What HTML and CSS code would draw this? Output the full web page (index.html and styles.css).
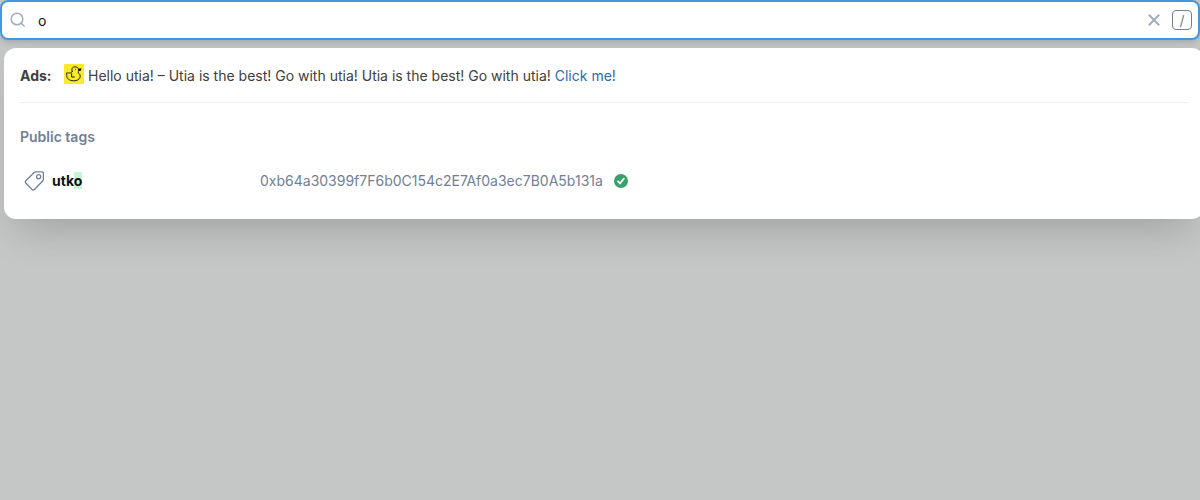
FILE: index.html
```html
<!DOCTYPE html>
<html lang="en">
<head>
<meta charset="utf-8">
<title>Search</title>
<link rel="stylesheet" href="styles.css">
</head>
<body>
<form class="search" role="search">
  <svg class="search-icon" viewBox="0 0 16 16" aria-hidden="true"><circle cx="7" cy="7" r="5.8"/><path d="M11.3 11.3l2.900 2.900"/></svg>
  <input class="search-input" type="text" value="o" aria-label="Search">
  <button class="clear" type="button" aria-label="Clear search"><svg viewBox="0 0 12 12" aria-hidden="true"><path d="M.8.8l10.4 10.4M11.2.8L.8 11.2"/></svg></button>
  <kbd class="key">/</kbd>
</form>
<main class="results">
  <section class="ad">
    <strong class="ad-label">Ads:</strong>
    <svg class="duck" viewBox="0 0 20 20" aria-hidden="true"><rect width="20" height="20" fill="#f9ea2e"/><path class="duck-line" d="M8.300 7.500C7 5 8.500 2.800 11 2.800c2.300 0 3.700 1.500 3.700 3.200 0 1.200-.7 2-.5 2.900 1.600 1 2.300 2.500 1.900 4.200-.7 2.500-3.100 3.700-6.600 3.700-4.200 0-6.700-2.300-6.700-5.200 0-1-.6-1.900-.3-2.500.4-.7 1.500-.1 2.700 0 1.300 0 2.400-.5 3.100-1.600M7.600 9.800v3.200h2.700"/><path d="M14.800 4.700l2.700-.5-.7 2.600-1.800.1z"/><circle cx="11.600" cy="5.200" r=".5"/></svg>
    <p class="ad-text">Hello utia! – Utia is the best! Go with utia! Utia is the best! Go with utia! <a href="#">Click me!</a></p>
  </section>
  <section>
    <h2 class="heading">Public tags</h2>
    <a class="result" href="#">
      <span class="tag">
        <svg class="tag-icon" viewBox="0 0 20 20" aria-hidden="true"><path d="M11.7.8h6.100a1.600 1.600 0 0 1 1.600 1.600v6.100a1.600 1.600 0 0 1-.5 1.200l-8.500 8.800a1.600 1.600 0 0 1-2.300 0L1.800 12a1.600 1.600 0 0 1 0-2.300l8.700-8.400a1.600 1.600 0 0 1 1.200-.5z"/><circle cx="14.600" cy="5.700" r="2.100"/></svg>
        <span class="tag-name">utk<mark>o</mark></span>
      </span>
      <span class="address">0xb64a30399f7F6b0C154c2E7Af0a3ec7B0A5b131a</span>
      <svg class="verified" viewBox="0 0 14 14" role="img" aria-label="Verified"><circle cx="7" cy="7" r="7"/><path d="M4 7.400l2 2 3.800-4.800"/></svg>
    </a>
  </section>
</main>
</body>
</html>
```
FILE: styles.css
```css
* { box-sizing: border-box; }
body {
  margin: 0;
  min-height: 100vh;
  overflow: hidden;
  background: #c5c7c6;
  font: 14px/20px Inter, sans-serif;
  color: #404040;
}
a { color: #2b6cb0; text-decoration: none; }
.search {
  display: flex;
  align-items: center;
  height: 40px;
  padding: 0 6px 0 8px;
  border: 2px solid #4299e1;
  border-radius: 8px;
  background: #fff;
  box-shadow: 0 4px 6px -1px rgba(0, 0, 0, .1), 0 2px 4px -1px rgba(0, 0, 0, .06);
}
.search-icon {
  width: 16px;
  height: 16px;
  fill: none;
  stroke: #a0aec0;
  stroke-width: 1.5;
  stroke-linecap: round;
}
.search-input {
  flex: 1;
  min-width: 0;
  padding: 1px 12px 0;
  border: 0;
  outline: 0;
  background: transparent;
  font: inherit;
  color: #101112;
}
.clear {
  display: flex;
  align-items: center;
  justify-content: center;
  width: 20px;
  height: 20px;
  margin-right: 8px;
  padding: 0;
  border: 0;
  background: none;
}
.clear svg {
  width: 12px;
  height: 12px;
  stroke: #a0aec0;
  stroke-width: 2;
}
.key {
  width: 20px;
  height: 20px;
  border: 1px solid #718096;
  border-radius: 4px;
  font: 14px/20px Inter, sans-serif;
  text-align: center;
  color: #718096;
}
.results {
  width: 100%;
  margin: 8px 0 0 4px;
  padding: 16px 16px 20px;
  border-radius: 12px;
  background: #fff;
  box-shadow: 0 20px 40px -12px rgba(0, 0, 0, .2);
}
.ad {
  display: flex;
  padding-bottom: 14px;
  border-bottom: 1px solid #eeeff0;
}
.ad-label {
  min-width: 32px;
  margin-right: 12px;
  line-height: 24px;
}
.duck {
  width: 20px;
  height: 20px;
  margin-right: 4px;
}
.duck-line {
  fill: none;
  stroke: #1c1c10;
  stroke-width: 1;
  stroke-linecap: round;
}
.ad-text {
  margin: 0;
  line-height: 24px;
}
.heading {
  margin: 24px 0 16px;
  font-size: 14px;
  font-weight: 600;
  line-height: 20px;
  color: #718096;
}
.result {
  display: flex;
  align-items: center;
  padding: 8px 0;
  color: #718096;
}
.tag {
  display: flex;
  align-items: center;
  gap: 8px;
  width: 240px;
  padding-left: 4px;
}
.tag-icon {
  width: 20px;
  height: 20px;
  fill: none;
  stroke: #718096;
  stroke-width: 1.3;
}
.tag-name {
  font-weight: 700;
  color: #101112;
}
.tag-name mark {
  background: #c6f6d5;
  color: inherit;
}
.address {
  min-width: 350px;
}
.verified {
  width: 14px;
  height: 14px;
  margin-left: 4px;
  fill: #38a169;
}
.verified path {
  fill: none;
  stroke: #fff;
  stroke-width: 1.8;
  stroke-linecap: round;
}
```
